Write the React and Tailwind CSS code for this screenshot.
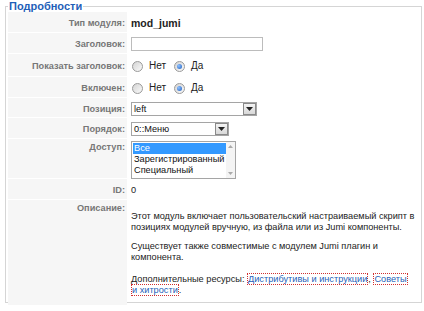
import React from 'react';

// Радиокнопка в стиле старого Windows
function Radio({ checked }) {
  return (
    <span className="relative inline-flex h-[11px] w-[11px] items-center justify-center rounded-full border border-[#9a9a9a] bg-gradient-to-br from-[#d4d4d4] to-[#fafafa]">
      {checked && (
        <span className="h-[5px] w-[5px] rounded-full bg-[radial-gradient(circle_at_35%_35%,#8fc1ff,#1f5fbf)]" />
      )}
    </span>
  );
}

function ArrowBtn() {
  return (
    <span className="flex h-full w-[13px] items-center justify-center border border-[#8a8a8a] bg-gradient-to-b from-[#f4f4f4] to-[#d8d8d8]">
      <svg width="7" height="4" viewBox="0 0 7 4">
        <path d="M0 0h7L3.5 4z" fill="#222" />
      </svg>
    </span>
  );
}

function Row({ label, h, children, top }) {
  return (
    <div className={`flex ${h}`}>
      <div className={`w-[119px] shrink-0 bg-[#f6f6f6] pr-[2px] text-right font-bold text-[#777] ${top ? 'pt-[2px]' : 'flex items-center justify-end pt-[2px]'}`}>
        {label}
      </div>
      <div className={`flex-1 pl-[4px] ${top ? 'pt-[2px]' : 'flex items-center pt-[2px]'}`}>{children}</div>
    </div>
  );
}

export default function App() {
  return (
    <div className="h-[311px] w-[424px] bg-white font-['Liberation_Sans',Arial,sans-serif] text-[9.2px] leading-[12px] text-[#333]">
      <fieldset className="ml-[5px] h-[303px] w-[417px] border border-[#d5d5d5] px-[2px] pb-[2px]">
        <legend className="px-[1px] text-[11px] font-bold leading-[12px] text-[#1f5fb8]">Подробности</legend>

        <div className="flex flex-col gap-px">
          <Row label="Тип модуля:" h="h-[20px]">
            <span className="text-[10.5px] font-bold text-[#222]">mod_jumi</span>
          </Row>
          <Row label="Заголовок:" h="h-[20px]">
            <span className="h-[14px] w-[132px] border border-[#bcbcbc] bg-white" />
          </Row>
          <Row label="Показать заголовок:" h="h-[22px]">
            <span className="ml-[1px] flex items-center gap-[6px]">
              <Radio />
              <span className="mr-[2px] text-[10px] text-[#222]">Нет</span>
              <Radio checked />
              <span className="text-[10px] text-[#222]">Да</span>
            </span>
          </Row>
          <Row label="Включен:" h="h-[20px]">
            <span className="ml-[1px] flex items-center gap-[6px]">
              <Radio />
              <span className="mr-[2px] text-[10px] text-[#222]">Нет</span>
              <Radio checked />
              <span className="text-[10px] text-[#222]">Да</span>
            </span>
          </Row>
          <Row label="Позиция:" h="h-[19px]">
            <span className="flex h-[14px] w-[126px] items-center border border-[#a5a5a5] bg-white">
              <span className="flex-1 pl-[2px] text-[#111]">left</span>
              <ArrowBtn />
            </span>
          </Row>
          <Row label="Порядок:" h="h-[20px]">
            <span className="flex h-[14px] w-[98px] items-center border border-[#a5a5a5] bg-white">
              <span className="flex-1 pl-[2px] text-[#111]">0::Меню</span>
              <ArrowBtn />
            </span>
          </Row>
          <Row label="Доступ:" h="h-[39px]" top>
            <span className="flex h-[38px] w-[105px] border border-[#a5a5a5] bg-white">
              <span className="flex flex-1 flex-col pt-px pl-px text-[#111]">
                <span className="h-[11px] bg-[#3399ff] pl-[1px] leading-[11px] text-white">Все</span>
                <span className="h-[11px] whitespace-nowrap pl-[1px] leading-[11px]">Зарегистрированный</span>
                <span className="h-[11px] pl-[1px] leading-[11px]">Специальный</span>
              </span>
              <span className="flex w-[9px] flex-col items-center justify-between bg-[#f4f4f4] py-[3px]">
                <svg width="5" height="3" viewBox="0 0 5 3"><path d="M0 3h5L2.5 0z" fill="#aaa" /></svg>
                <svg width="5" height="3" viewBox="0 0 5 3"><path d="M0 0h5L2.5 3z" fill="#aaa" /></svg>
              </span>
            </span>
          </Row>
          <Row label="ID:" h="h-[20px]">
            <span className="text-[#222]">0</span>
          </Row>
          <Row label="Описание:" h="h-[105px]" top>
            <div className="pt-[9px] pr-[4px] leading-[11px] text-[#222]">
              <p>Этот модуль включает пользовательский настраиваемый скрипт в позициях модулей вручную, из файла или из Jumi компоненты.</p>
              <p className="mt-[8px]">Существует также совместимые с модулем Jumi плагин и компонента.</p>
              <p className="mt-[11px]">
                Дополнительные ресурсы:{' '}
                <a className="border border-dotted border-[#d03030] text-[#1f5fb8] [box-decoration-break:clone]">Дистрибутивы и инструкции</a>,{' '}
                <a className="border border-dotted border-[#d03030] text-[#1f5fb8] [box-decoration-break:clone]">Советы<br />и хитрости</a>.
              </p>
            </div>
          </Row>
        </div>
      </fieldset>
    </div>
  );
}
